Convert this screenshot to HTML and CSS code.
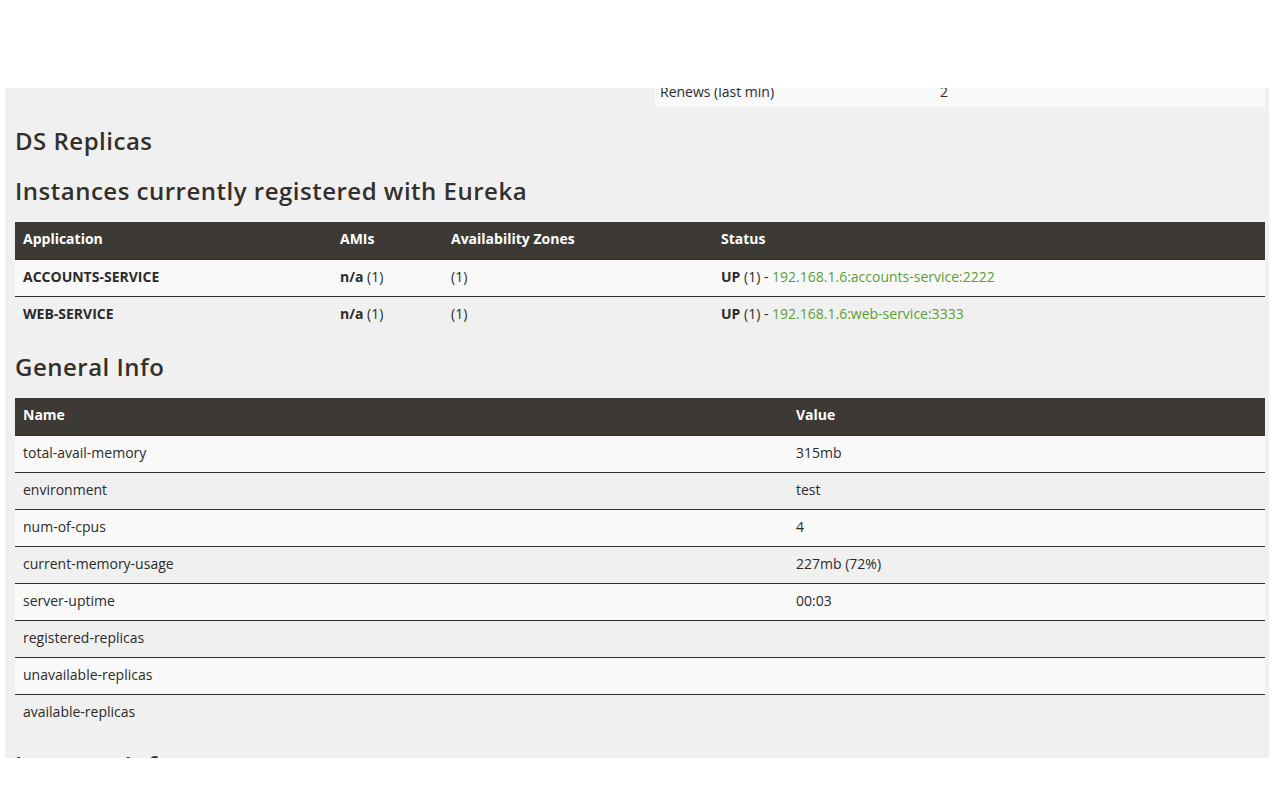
FILE: index.html
```html
<!DOCTYPE html>
<html lang="en">
<head>
<meta charset="utf-8">
<title>Eureka</title>
<link rel="stylesheet" href="styles.css">
</head>
<body>
<div class="viewport">
  <div class="content">
    <div class="status-row">
      <div class="col"></div>
      <div class="col">
        <table class="tbl small">
          <colgroup><col class="c-key"><col></colgroup>
          <tbody>
            <tr class="odd"><td>Renews (last min)</td><td>2</td></tr>
          </tbody>
        </table>
      </div>
    </div>

    <h2 class="heading first">DS Replicas</h2>

    <h2 class="heading">Instances currently registered with Eureka</h2>
    <table class="tbl">
      <colgroup><col class="c-app"><col class="c-ami"><col class="c-zone"><col></colgroup>
      <thead>
        <tr><th>Application</th><th>AMIs</th><th>Availability Zones</th><th>Status</th></tr>
      </thead>
      <tbody>
        <tr class="odd">
          <td><b>ACCOUNTS-SERVICE</b></td>
          <td><b>n/a</b> (1)</td>
          <td>(1)</td>
          <td><b>UP</b> (1) - <a class="link" href="#">192.168.1.6:accounts-service:2222</a></td>
        </tr>
        <tr>
          <td><b>WEB-SERVICE</b></td>
          <td><b>n/a</b> (1)</td>
          <td>(1)</td>
          <td><b>UP</b> (1) - <a class="link" href="#">192.168.1.6:web-service:3333</a></td>
        </tr>
      </tbody>
    </table>

    <h2 class="heading after-table">General Info</h2>
    <table class="tbl">
      <colgroup><col class="c-name"><col></colgroup>
      <thead>
        <tr><th>Name</th><th>Value</th></tr>
      </thead>
      <tbody>
        <tr class="odd"><td>total-avail-memory</td><td>315mb</td></tr>
        <tr><td>environment</td><td>test</td></tr>
        <tr class="odd"><td>num-of-cpus</td><td>4</td></tr>
        <tr><td>current-memory-usage</td><td>227mb (72%)</td></tr>
        <tr class="odd"><td>server-uptime</td><td>00:03</td></tr>
        <tr><td>registered-replicas</td><td></td></tr>
        <tr class="odd"><td>unavailable-replicas</td><td></td></tr>
        <tr><td>available-replicas</td><td></td></tr>
      </tbody>
    </table>

    <h2 class="heading after-table">Instance Info</h2>
  </div>
</div>
</body>
</html>
```

FILE: styles.css
```css
html, body {
  margin: 0;
  padding: 0;
  background: #ffffff;
}

body {
  font-family: "Open Sans", "Liberation Sans", sans-serif;
  font-size: 14px;
  color: #2b2b2b;
}

.viewport {
  margin: 88px 0 0 5px;
  width: 1264px;
  height: 670px;
  background: #f0f0f0;
  overflow: hidden;
}

.content {
  margin-top: -11px;
  padding: 0 4px 0 10px;
}

.status-row {
  display: grid;
  grid-template-columns: 1fr 610px;
  column-gap: 30px;
}

.heading {
  font-family: "Open Sans", "Liberation Sans", sans-serif;
  font-weight: 600;
  font-size: 24px;
  line-height: 26px;
  letter-spacing: 0.5px;
  color: #33302c;
  margin: 20px 0 18px;
}

.heading.first {
  margin-top: 21px;
  margin-bottom: 24px;
}

.heading.after-table {
  margin-top: 21px;
}

.tbl {
  width: 100%;
  border-collapse: collapse;
  table-layout: fixed;
}

.tbl th {
  background: #3d3934;
  color: #ffffff;
  font-weight: 700;
  text-align: left;
  padding: 7px 8px 10px;
  line-height: 20px;
}

.tbl td {
  padding: 7px 8px 9px;
  line-height: 20px;
  border-top: 1px solid #2f2f2f;
  text-align: left;
}

.tbl tr.odd td {
  background: #f9f9f9;
}

.tbl.small td {
  padding: 5px;
  border-top: none;
}

.c-key { width: 280px; }
.c-app { width: 317px; }
.c-ami { width: 111px; }
.c-zone { width: 270px; }
.c-name { width: 773px; }

.link {
  color: #5a9f34;
  text-decoration: none;
}
```
